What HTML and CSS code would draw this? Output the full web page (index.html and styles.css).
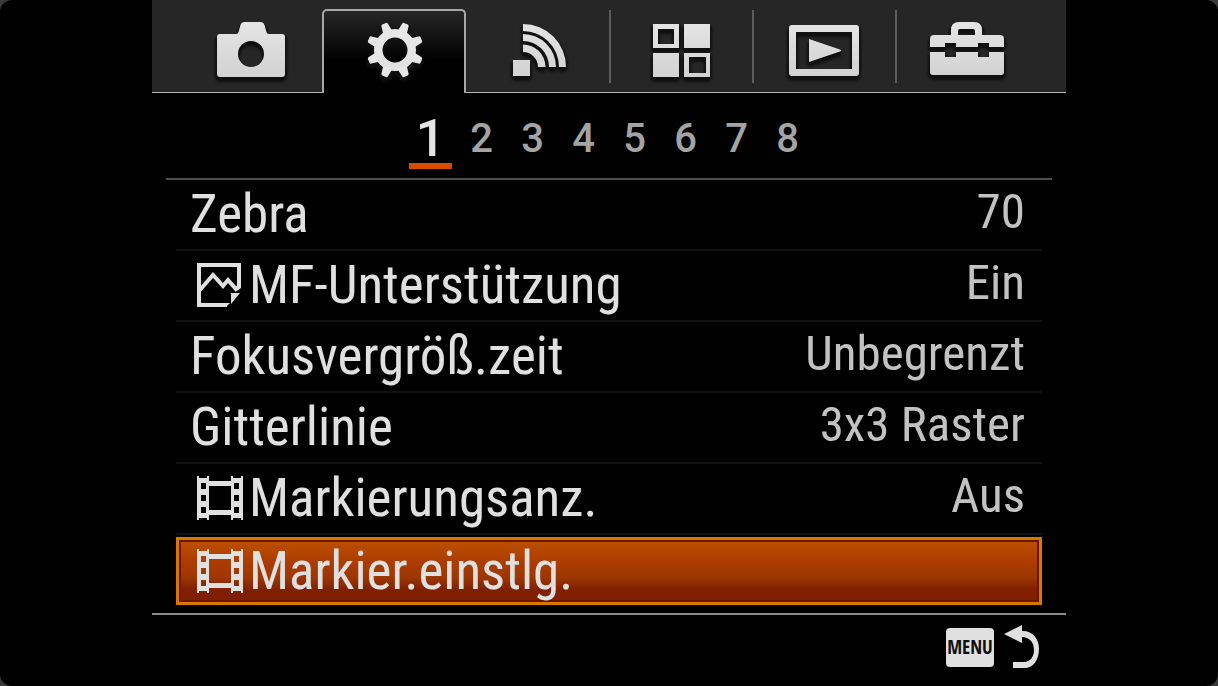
FILE: index.html
```html
<!DOCTYPE html>
<html lang="de">
<head>
<meta charset="utf-8">
<title>Kameramenü</title>
<link rel="stylesheet" href="styles.css">
</head>
<body>
<svg class="defs" width="0" height="0" aria-hidden="true">
  <defs>
    <linearGradient id="silver" x1="0" y1="0" x2="0" y2="64" gradientUnits="userSpaceOnUse">
      <stop offset="0" stop-color="#e6e6e6"/>
      <stop offset="1" stop-color="#d0d0d0"/>
    </linearGradient>
    <symbol id="film" viewBox="0 0 46 46">
      <path fill-rule="evenodd" d="M0 1h2v2h8V1h2v5h22V1h2v2h8V1h2v44h-2v-2h-8v2h-2v-5H12v5h-2v-2H2v2H0zM12 11v24h22V11zM4 8v6h5V8zM4 20v6h5v-6zM4 32v6h5v-6zM37 8v6h5V8zM37 20v6h5v-6zM37 32v6h5v-6z"/>
    </symbol>
  </defs>
</svg>
<main class="device">
  <nav class="tabs" aria-label="Menügruppen">
    <button class="tab tab-first" aria-label="Aufnahme">
      <svg class="tab-icon" viewBox="0 0 80 64"><path fill-rule="evenodd" d="M9 16h16q2 0 2.500-2l2-7q1-3 4-3h16q3 0 4 3l2 7q.5 2 2.500 2h13q3 0 3 3v37q0 3-3 3H9q-3 0-3-3V19q0-3 3-3zM40 23a13 13 0 1 0 0 26a13 13 0 1 0 0-26z"/></svg>
    </button>
    <button class="tab tab-active" aria-label="Benutzereinstellungen" aria-current="true">
      <svg class="tab-icon" viewBox="0 0 80 64">
        <g transform="translate(41 32)">
          <path fill-rule="evenodd" d="M0-21a21 21 0 1 0 0 42a21 21 0 1 0 0-42zM0-12.500a12.500 12.500 0 1 1 0 25a12.500 12.500 0 1 1 0-25z"/>
          <path id="tooth" d="M-5-18l1.500-9q.3-1.500 1.500-1.500h4q1.200 0 1.500 1.500l1.500 9z" transform="rotate(22.500)"/>
          <use href="#tooth" transform="rotate(45)"/><use href="#tooth" transform="rotate(90)"/><use href="#tooth" transform="rotate(135)"/><use href="#tooth" transform="rotate(180)"/><use href="#tooth" transform="rotate(225)"/><use href="#tooth" transform="rotate(270)"/><use href="#tooth" transform="rotate(315)"/>
        </g>
      </svg>
    </button>
    <button class="tab" aria-label="Drahtlos">
      <svg class="tab-icon" viewBox="0 0 80 64"><path d="M25 6a43 43 0 0 1 43 43h-7a36 36 0 0 0-36-36zM25 16a33 33 0 0 1 33 33h-7a26 26 0 0 0-26-26zM25 26.500a22.500 22.500 0 0 1 22.500 22.500H40a15 15 0 0 0-15-15zM15 42h17v16H15z"/></svg>
    </button>
    <button class="tab tab-divided" aria-label="Applikation">
      <svg class="tab-icon" viewBox="0 0 80 64"><path fill-rule="evenodd" d="M12 6h26v24H12zM17 11v15h16V11zM43 6h26v24H43zM12 35h26v24H12zM43 35h26v24H43zM48 39v16h17V39z"/></svg>
    </button>
    <button class="tab tab-divided" aria-label="Wiedergabe">
      <svg class="tab-icon" viewBox="0 0 80 64"><path fill-rule="evenodd" d="M8 7h64q3 0 3 3v45q0 3-3 3H8q-3 0-3-3V10q0-3 3-3zM12 14v37h56V14z"/><path d="M25 21l31 10.500q2 1 0 2L25 44z"/></svg>
    </button>
    <button class="tab tab-divided tab-last" aria-label="Setup">
      <svg class="tab-icon" viewBox="0 0 80 64"><path fill-rule="evenodd" d="M7 17h17v-5q0-8 8-8h15q8 0 8 8v5h18q4 0 4 4v8H62v-4H51v4H29v-4H18v4H3v-8q0-4 4-4zM31 17h17v-4q0-2-2-2H33q-2 0-2 2zM3 34h15v5h11v-5h22v5h11v-5h15v20q0 3-3 3H6q-3 0-3-3z"/></svg>
    </button>
  </nav>

  <nav class="pages" aria-label="Seiten">
    <button class="page page-active" aria-current="page">1</button>
    <button class="page">2</button>
    <button class="page">3</button>
    <button class="page">4</button>
    <button class="page">5</button>
    <button class="page">6</button>
    <button class="page">7</button>
    <button class="page">8</button>
  </nav>

  <ul class="menu">
    <li class="item"><button class="row"><span class="label">Zebra</span><span class="value">70</span></button></li>
    <li class="item"><button class="row"><svg class="row-icon" viewBox="0 0 46 46"><path class="stroke" d="M2 3h40v22l-3 2-8-9-5 6-10-11L2 29M2 1v42h28"/><path d="M34 31h9l-9 11zM0 41h33l-4 4H0z"/></svg><span class="label">MF-Unterstützung</span><span class="value">Ein</span></button></li>
    <li class="item"><button class="row"><span class="label">Fokusvergröß.zeit</span><span class="value">Unbegrenzt</span></button></li>
    <li class="item"><button class="row"><span class="label">Gitterlinie</span><span class="value">3x3 Raster</span></button></li>
    <li class="item"><button class="row"><svg class="row-icon"><use href="#film"/></svg><span class="label">Markierungsanz.</span><span class="value">Aus</span></button></li>
    <li class="item"><button class="row row-selected"><svg class="row-icon"><use href="#film"/></svg><span class="label">Markier.einstlg.</span></button></li>
  </ul>

  <footer class="footer">
    <button class="back" aria-label="MENU zurück">
      <span class="menu-key">MENU</span>
      <svg class="back-icon" viewBox="0 0 36 44"><path d="M0 9L18 0v6h1c10 0 16 8 16 18 0 11-6 19-14 19H9v-6h11c6 0 10-5 10-12 0-8-5-13-12-13v6z"/></svg>
    </button>
  </footer>
</main>
</body>
</html>
```
FILE: styles.css
```css
* {
  box-sizing: border-box;
}

html {
  min-height: 100%;
  background: #3a3a3a;
}

body {
  margin: 0;
  min-height: 100vh;
  padding: 0 152px;
  background: #010101;
  border-radius: 12px;
  color: #e0e0e0;
  font-family: "Roboto Condensed", Roboto, sans-serif;
}

button {
  margin: 0;
  padding: 0;
  border: 0;
  background: none;
  color: inherit;
  font: inherit;
  text-align: left;
}

.defs {
  position: absolute;
}

.tabs {
  display: grid;
  grid-template-columns: 170fr 144fr 143fr 143fr 143fr 171fr;
  height: 93px;
  background: #262626;
}

.tab {
  display: flex;
  justify-content: center;
  padding-top: 18px;
  border-bottom: 1px solid #b4b4b4;
}

.tab-first {
  padding-left: 28px;
}

.tab-last {
  padding-right: 28px;
}

.tab-active {
  margin-top: 9px;
  padding-top: 7px;
  border: 2px solid #a8a8a8;
  border-bottom: 0;
  border-radius: 5px 5px 0 0;
  background: linear-gradient(#262626, #010101 60%);
}

.tab-divided {
  background: linear-gradient(#5c5c5c, #5c5c5c) 0 10px / 2px 73px no-repeat;
}

.tab-icon {
  width: 80px;
  height: 64px;
  fill: url(#silver);
  overflow: visible;
  filter: drop-shadow(-2px 3px 1px #101010) drop-shadow(2px 2px 1px #101010);
}

.pages {
  display: flex;
  justify-content: center;
  gap: 8px;
  height: 87px;
  margin: 0 14px;
  padding: 15px 0 9px;
  border-bottom: 2px solid #505050;
}

.page {
  width: 43px;
  color: #a4a4a4;
  font-family: Roboto, sans-serif;
  font-size: 40px;
  font-weight: 500;
  line-height: 60px;
  text-align: center;
}

.page-active {
  padding-top: 6px;
  border-bottom: 6px solid #d84c00;
  color: #e4e4e4;
  font-size: 52px;
  line-height: 48px;
}

.menu {
  margin: 0 24px;
  padding: 0;
  list-style: none;
}

.item {
  height: 71px;
  border-bottom: 2px solid #121212;
}

.item:last-child {
  height: 78px;
  padding-top: 2px;
  border-bottom: 0;
}

.row {
  display: flex;
  align-items: center;
  width: 100%;
  height: 68px;
  padding: 0 17px 0 14px;
}

.row-icon {
  width: 46px;
  height: 46px;
  margin: 0 6px 0 7px;
  fill: #e0e0e0;
}

.stroke {
  fill: none;
  stroke: #e0e0e0;
  stroke-width: 4;
}

.label {
  font-size: 53px;
  line-height: 68px;
}

.value {
  margin-left: auto;
  color: #c2c2c2;
  font-size: 49px;
  line-height: 64px;
  padding-bottom: 4px;
}

.row-selected {
  padding: 0 14px 0 11px;
  border: 3px solid #d87800;
  background: linear-gradient(#bc5000, #ac3c00 35%, #9c3800 60%, #802000 80%);
  box-shadow: inset 0 0 0 2px #6c1400;
}

.footer {
  display: flex;
  justify-content: flex-end;
  padding: 10px 26px 0 0;
  border-top: 2px solid #8c8c8c;
}

.back {
  display: flex;
  align-items: center;
  gap: 10px;
}

.menu-key {
  width: 48px;
  border-radius: 4px;
  background: #e0e0e0;
  color: #101010;
  font-family: "Open Sans Condensed", "Roboto Condensed", sans-serif;
  font-size: 19px;
  line-height: 39px;
  text-align: center;
}

.back-icon {
  width: 36px;
  height: 44px;
  fill: #e0e0e0;
}
```
